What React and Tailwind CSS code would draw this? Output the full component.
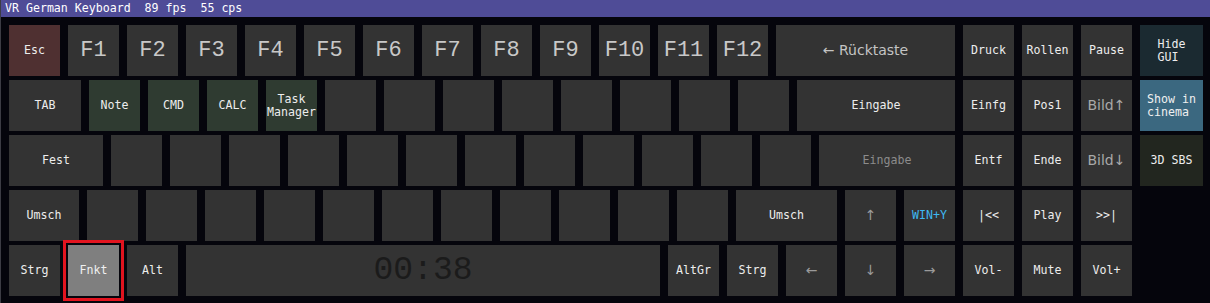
import React from "react";

// Key definitions per row: label, width class, variant
const rows = [
  [
    { label: "Esc", tone: "esc" },
    ...["F1", "F2", "F3", "F4", "F5", "F6", "F7", "F8", "F9", "F10", "F11", "F12"].map((f) => ({ label: f, tone: "fkey" })),
    { label: "← Rücktaste", w: "w-[179px]", tone: "sans" },
    { label: "Druck" },
    { label: "Rollen" },
    { label: "Pause" },
    { label: ["Hide", "GUI"], w: "w-[63px]", tone: "hide", left: true },
  ],
  [
    { label: "TAB", w: "w-[72px]" },
    { label: "Note", tone: "green" },
    { label: "CMD", tone: "green" },
    { label: "CALC", tone: "green" },
    { label: ["Task", "Manager"], tone: "green" },
    ...Array(8).fill({}),
    { label: "Eingabe", w: "w-[158px]" },
    { label: "Einfg" },
    { label: "Pos1" },
    { label: "Bild↑", tone: "sansgrey" },
    { label: ["Show in", "cinema"], w: "w-[63px]", tone: "cinema", left: true },
  ],
  [
    { label: "Fest", w: "w-[94px]" },
    ...Array(12).fill({}),
    { label: "Eingabe", w: "w-[136px]", tone: "dim" },
    { label: "Entf" },
    { label: "Ende" },
    { label: "Bild↓", tone: "sansgrey" },
    { label: "3D SBS", w: "w-[63px]", tone: "sbs" },
  ],
  [
    { label: "Umsch", w: "w-[70px]" },
    ...Array(11).fill({}),
    { label: "Umsch", w: "w-[101px]" },
    { label: "↑", tone: "arrow" },
    { label: "WIN+Y", tone: "blue" },
    { label: "|<<" },
    { label: "Play" },
    { label: ">>|" },
  ],
  [
    { label: "Strg" },
    { label: "Fnkt", tone: "active" },
    { label: "Alt" },
    { label: "00:38", w: "w-[474px]", tone: "clock" },
    { label: "AltGr" },
    { label: "Strg" },
    { label: "←", tone: "arrow" },
    { label: "↓", tone: "arrow" },
    { label: "→", tone: "arrow" },
    { label: "Vol-" },
    { label: "Mute" },
    { label: "Vol+" },
  ],
];

const toneClass = {
  default: "bg-[#333333] text-[#ededed] text-[11.6px]",
  esc: "bg-[#4f3031] text-[#ededed] text-[11.6px]",
  fkey: "bg-[#333333] text-[#c8c8c8] text-[22px] font-['Liberation_Mono',monospace]",
  sans: "bg-[#333333] text-[#c4c4c4] text-[14px] font-['DejaVu_Sans',sans-serif]",
  sansgrey: "bg-[#333333] text-[#a8a8a8] text-[14px] font-['DejaVu_Sans',sans-serif]",
  green: "bg-[#2f3b31] text-[#ededed] text-[11.6px]",
  hide: "bg-[#1b2a31] text-[#ededed] text-[11.6px]",
  cinema: "bg-[#3b6880] text-[#f0f0f0] text-[11.6px]",
  sbs: "bg-[#22261f] text-[#ededed] text-[11.6px]",
  dim: "bg-[#333333] text-[#8c8c8c] text-[11.6px]",
  arrow: "bg-[#333333] text-[#9a9a9a] text-[14px] font-['DejaVu_Sans',sans-serif]",
  blue: "bg-[#333333] text-[#3fb8f2] text-[11.6px]",
  active: "bg-[#7f7f7f] text-[#f0f0f0] text-[11.6px] outline-[3px] outline-solid outline-[#e2141f] outline-offset-2",
  clock: "bg-[#333333] text-[#1b1b1b] text-[33px] font-['Liberation_Mono',monospace]",
};

const Key = ({ label, w = "w-[51px]", tone = "default", left = false }) => {
  const lines = Array.isArray(label) ? label : label ? [label] : [];
  return (
    <div className={`${w} h-[51px] shrink-0 flex items-center justify-center leading-[13px] ${toneClass[tone]}`}>
      {lines.length > 0 && (
        <div className={`flex flex-col ${left ? "items-start" : "items-center"} ${tone === "fkey" || tone === "clock" ? "leading-none" : ""}`}>
          {lines.map((l, i) => (
            <span key={i} className="whitespace-pre">{l}</span>
          ))}
        </div>
      )}
    </div>
  );
};

export default function App() {
  return (
    <div className="w-[1210px] h-[303px] bg-[#05050c] border-l border-[#3c3c44] font-['DejaVu_Sans_Mono','Liberation_Mono',monospace] overflow-hidden">
      {/* Title bar */}
      <div className="h-[17px] bg-[#4f4c97] text-white text-[11.6px] leading-[17px] pl-[4px] whitespace-pre">
        VR German Keyboard  89 fps  55 cps
      </div>

      <div className="flex flex-col gap-1 pl-2 pt-2">
        {rows.map((row, r) => (
          <div key={r} className="flex gap-2">
            {row.map((k, i) => (
              <Key key={i} {...k} />
            ))}
          </div>
        ))}
      </div>
    </div>
  );
}
